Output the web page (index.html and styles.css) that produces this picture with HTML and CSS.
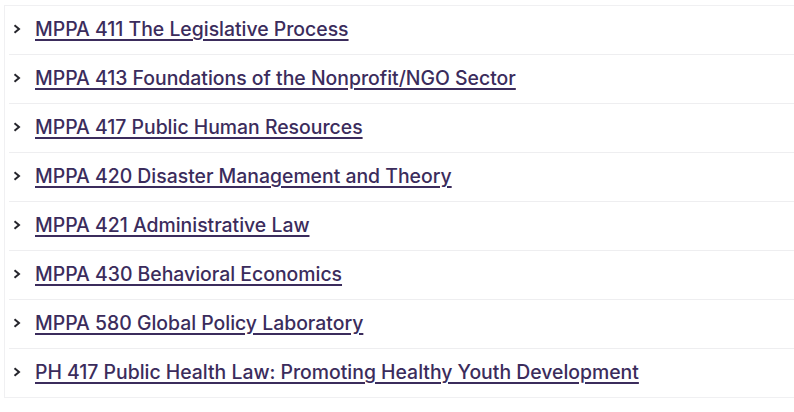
FILE: index.html
```html
<!DOCTYPE html>
<html>
<head>
<meta charset="utf-8">
<link rel="stylesheet" href="styles.css">
</head>
<body>
<div class="list">
  <div class="row"><span class="chev"><svg width="10" height="12" viewBox="0 0 10 12"><path d="M2.5 2.2 L7 6 L2.5 9.8" fill="none" stroke="#25252c" stroke-width="2"/></svg></span><a href="#">MPPA 411 The Legislative Process</a></div>
  <div class="row"><span class="chev"><svg width="10" height="12" viewBox="0 0 10 12"><path d="M2.5 2.2 L7 6 L2.5 9.8" fill="none" stroke="#25252c" stroke-width="2"/></svg></span><a href="#">MPPA 413 Foundations of the Nonprofit/NGO Sector</a></div>
  <div class="row"><span class="chev"><svg width="10" height="12" viewBox="0 0 10 12"><path d="M2.5 2.2 L7 6 L2.5 9.8" fill="none" stroke="#25252c" stroke-width="2"/></svg></span><a href="#">MPPA 417 Public Human Resources</a></div>
  <div class="row"><span class="chev"><svg width="10" height="12" viewBox="0 0 10 12"><path d="M2.5 2.2 L7 6 L2.5 9.8" fill="none" stroke="#25252c" stroke-width="2"/></svg></span><a href="#">MPPA 420 Disaster Management and Theory</a></div>
  <div class="row"><span class="chev"><svg width="10" height="12" viewBox="0 0 10 12"><path d="M2.5 2.2 L7 6 L2.5 9.8" fill="none" stroke="#25252c" stroke-width="2"/></svg></span><a href="#">MPPA 421 Administrative Law</a></div>
  <div class="row"><span class="chev"><svg width="10" height="12" viewBox="0 0 10 12"><path d="M2.5 2.2 L7 6 L2.5 9.8" fill="none" stroke="#25252c" stroke-width="2"/></svg></span><a href="#">MPPA 430 Behavioral Economics</a></div>
  <div class="row"><span class="chev"><svg width="10" height="12" viewBox="0 0 10 12"><path d="M2.5 2.2 L7 6 L2.5 9.8" fill="none" stroke="#25252c" stroke-width="2"/></svg></span><a href="#">MPPA 580 Global Policy Laboratory</a></div>
  <div class="row"><span class="chev"><svg width="10" height="12" viewBox="0 0 10 12"><path d="M2.5 2.2 L7 6 L2.5 9.8" fill="none" stroke="#25252c" stroke-width="2"/></svg></span><a href="#">PH 417 Public Health Law: Promoting Healthy Youth Development</a></div>
</div>
</body>
</html>
```
FILE: styles.css
```css
html, body {
  margin: 0;
  padding: 0;
  background: #ffffff;
}
body {
  padding: 5px 0 0 4px;
  font-family: "Inter", "Liberation Sans", sans-serif;
}
.list {
  width: 800px;
  border: 1px solid #f0f0f2;
  border-right: none;
  padding: 0 0 0 4px;
  box-sizing: border-box;
}
.row {
  display: flex;
  align-items: center;
  padding-bottom: 2px;
  box-sizing: border-box;
  border-bottom: 1px solid #eeeef0;
  height: 49px;
}
.row:last-child {
  border-bottom: none;
  height: 48px;
}
.chev {
  display: flex;
  align-items: center;
  width: 26px;
  padding-left: 3px;
  box-sizing: border-box;
}
.row a {
  color: #3b2c5c;
  font-size: 19.4px;
  font-weight: 500;
  text-decoration: underline;
  text-decoration-thickness: 2px;
  text-underline-offset: 3px;
}
```
